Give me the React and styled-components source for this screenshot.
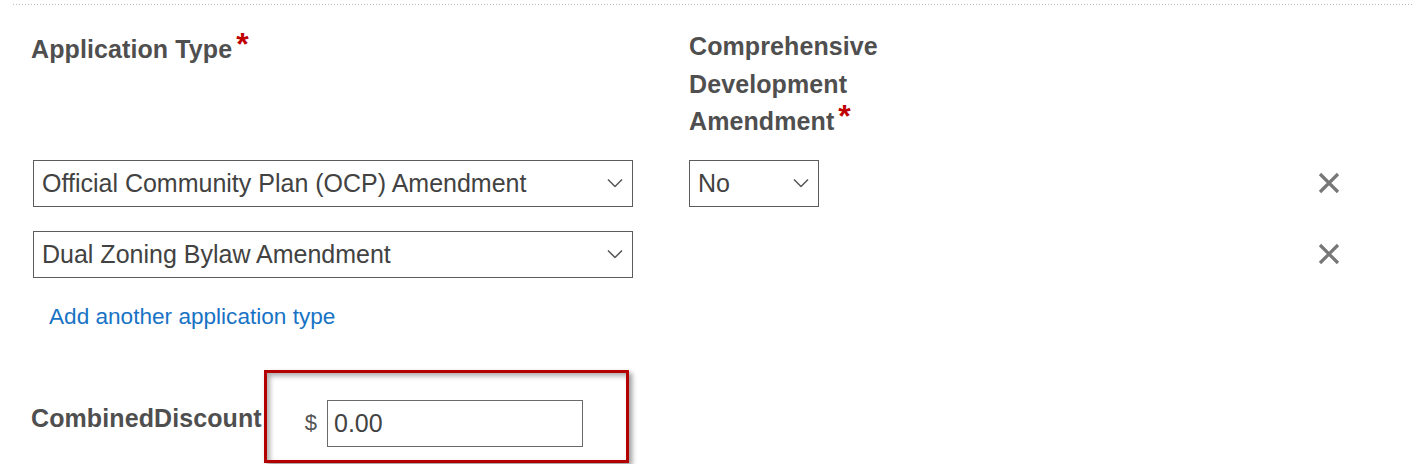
import React from 'react';
import styled, { createGlobalStyle } from 'styled-components';

const GlobalStyle = createGlobalStyle`
  html, body { margin: 0; padding: 0; background: #fff; }
  body { font-family: "Liberation Sans", Arial, sans-serif; color: #505050; }
  * { box-sizing: border-box; }
`;

const Page = styled.div`
  width: 1428px;
  height: 464px;
  overflow: hidden;
  padding-top: 4px;
`;

const Divider = styled.div`
  margin: 0 15px 0 13px;
  height: 1px;
  background: repeating-linear-gradient(to right, #bdbdbd 0 1px, transparent 1px 3px);
`;

const Form = styled.div`
  padding: 0 87px 0 31px;
`;

const FieldRow = styled.div`
  display: grid;
  grid-template-columns: 602px 130px 1fr 24px;
  column-gap: 56px;
  align-items: ${p => p.$align || 'center'};
  margin-top: ${p => p.$top || 0}px;
`;

const Label = styled.div`
  font-weight: 700;
  font-size: 25px;
  line-height: 37.5px;
  color: #4f4f4f;
  width: ${p => p.$w || 'auto'};
  padding-top: ${p => p.$pt || 0}px;
  margin-top: ${p => p.$mt || 0}px;
  white-space: ${p => (p.$nowrap ? 'nowrap' : 'normal')};
  letter-spacing: 0.1px;
`;

const Req = styled.span`
  color: #c00000;
  font-size: 32px;
  line-height: 0;
  position: relative;
  top: -3px;
  margin-left: 4px;
`;

const SelectWrap = styled.div`
  position: relative;
  width: ${p => p.$w}px;
  margin-left: ${p => p.$ml || 0}px;
`;

const Select = styled.select`
  appearance: none;
  -webkit-appearance: none;
  display: block;
  width: 100%;
  height: 47px;
  margin: 0;
  border: 1px solid #5c5c5c;
  border-radius: 0;
  background: #fff;
  font-family: "Liberation Sans", Arial, sans-serif;
  font-size: 25px;
  color: #424242;
  padding: 0 36px 0 8px;
  outline: none;
`;

const Chevron = styled.svg`
  position: absolute;
  right: 10px;
  top: 50%;
  transform: translateY(-50%);
  pointer-events: none;
`;

const RemoveButton = styled.button`
  display: flex;
  align-items: center;
  justify-content: center;
  width: 24px;
  height: 24px;
  padding: 0;
  border: none;
  background: none;
  cursor: pointer;
`;

const AddLink = styled.a`
  display: block;
  margin-top: 25px;
  padding-left: 18px;
  font-size: 22.6px;
  line-height: 27px;
  color: #1873c5;
  text-decoration: none;
`;

const DiscountRow = styled.div`
  display: flex;
  align-items: flex-start;
  margin-top: 40px;
`;

const Highlight = styled.div`
  margin-left: 2px;
  width: 365px;
  height: 93px;
  border: 3px solid #b30000;
  padding: 27px 0 0 38px;
  box-shadow: 3px 3px 5px rgba(0, 0, 0, 0.4), inset 3px 3px 5px rgba(0, 0, 0, 0.32);
`;

const MoneyField = styled.div`
  display: flex;
  align-items: center;
  gap: 10px;
`;

const Currency = styled.span`
  font-size: 22px;
  color: #555;
`;

const MoneyInput = styled.input`
  width: 256px;
  height: 47px;
  margin: 0;
  border: 1px solid #6a6a6a;
  border-radius: 0;
  padding: 0 0 0 6px;
  font-family: "Liberation Sans", Arial, sans-serif;
  font-size: 25px;
  color: #424242;
  outline: none;
`;

const ChevronIcon = () => (
  <Chevron width="16" height="9" viewBox="0 0 16 9">
    <polyline points="1,1 8,8 15,1" fill="none" stroke="#555" strokeWidth="1.5" />
  </Chevron>
);

const XIcon = () => (
  <svg width="24" height="24" viewBox="0 0 24 24">
    <path d="M3 3 L21 21 M21 3 L3 21" stroke="#777" strokeWidth="3.2" fill="none" />
  </svg>
);

const Dropdown = ({ w, ml, value, options }) => (
  <SelectWrap $w={w} $ml={ml}>
    <Select defaultValue={value}>
      {options.map(o => (
        <option key={o}>{o}</option>
      ))}
    </Select>
    <ChevronIcon />
  </SelectWrap>
);

const typeOptions = [
  'Official Community Plan (OCP) Amendment',
  'Dual Zoning Bylaw Amendment',
  'Rezoning',
  'Development Permit',
];

export default function App() {
  return (
    <>
      <GlobalStyle />
      <Page>
        <Divider />
        <Form>
          <FieldRow $align="start" $top={23}>
            <Label $pt={3} $nowrap>
              Application Type<Req>*</Req>
            </Label>
            <Label $w="200px">
              Comprehensive Development Amendment<Req>*</Req>
            </Label>
          </FieldRow>

          <FieldRow $top={19}>
            <Dropdown w={600} ml={2} value="Official Community Plan (OCP) Amendment" options={typeOptions} />
            <Dropdown w={130} value="No" options={['No', 'Yes']} />
            <span />
            <RemoveButton aria-label="Remove">
              <XIcon />
            </RemoveButton>
          </FieldRow>

          <FieldRow $top={24}>
            <Dropdown w={600} ml={2} value="Dual Zoning Bylaw Amendment" options={typeOptions} />
            <span />
            <span />
            <RemoveButton aria-label="Remove">
              <XIcon />
            </RemoveButton>
          </FieldRow>

          <AddLink href="#">Add another application type</AddLink>

          <DiscountRow>
            <Label $nowrap $mt={30}>CombinedDiscount</Label>
            <Highlight>
              <MoneyField>
                <Currency>$</Currency>
                <MoneyInput defaultValue="0.00" />
              </MoneyField>
            </Highlight>
          </DiscountRow>
        </Form>
      </Page>
    </>
  );
}
